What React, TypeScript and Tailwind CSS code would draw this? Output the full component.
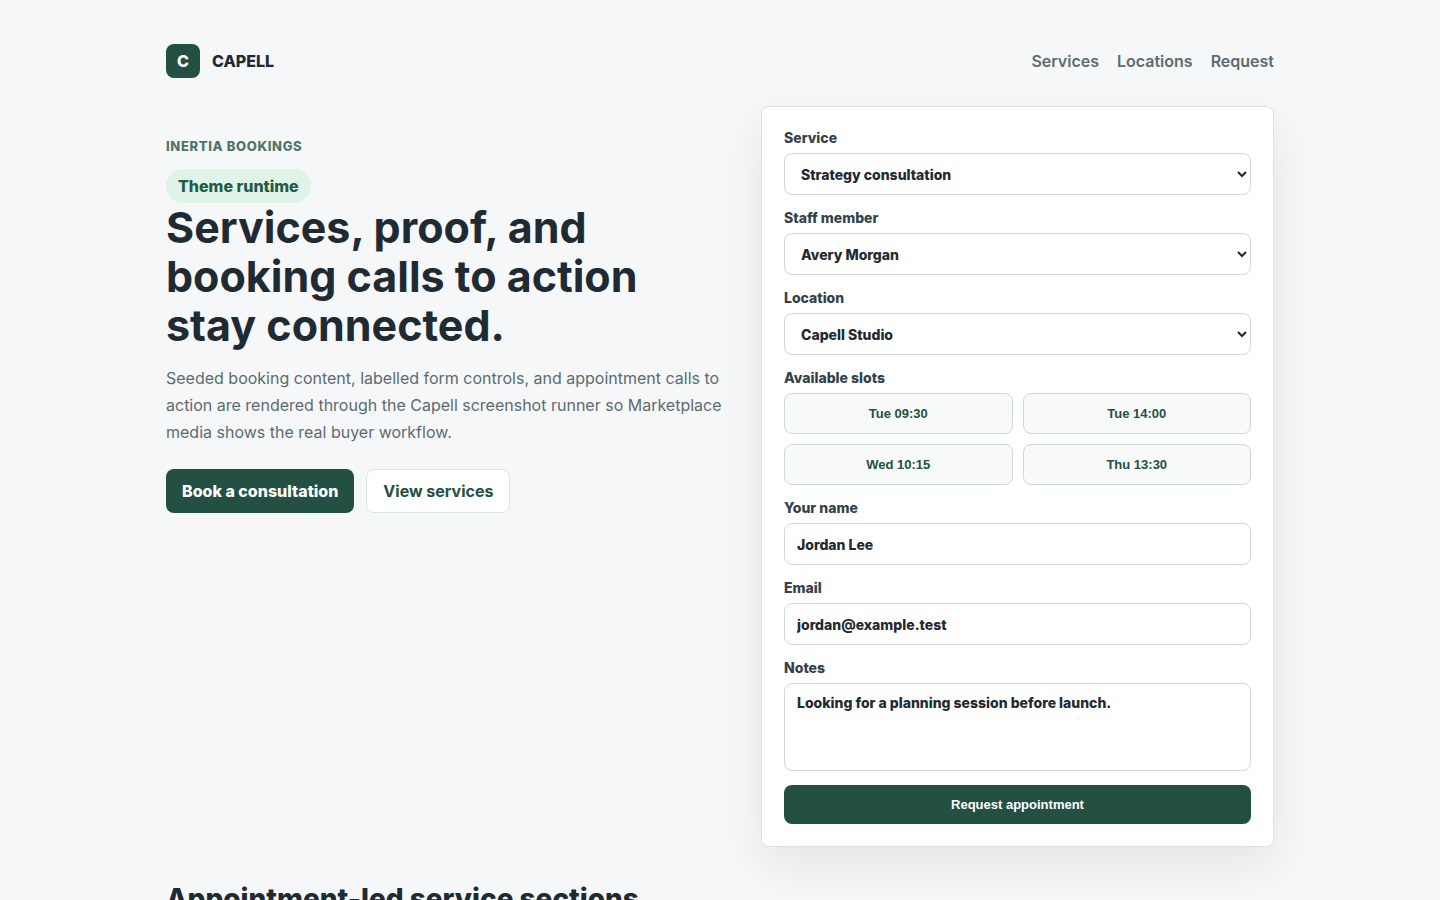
import type { ReactNode } from "react";

const labelClass = "text-[14px] leading-[17px] font-extrabold text-[#33424a]";

const controlClass =
  "w-full rounded-lg border border-[#cbdad6] bg-white px-3 text-[14px] leading-5 font-extrabold text-[#1f2a33]";

function Field({ id, label, children }: { id: string; label: string; children: ReactNode }) {
  return (
    <div className="grid gap-[7px]">
      <label htmlFor={id} className={labelClass}>
        {label}
      </label>
      {children}
    </div>
  );
}

function SelectField({ id, label, options }: { id: string; label: string; options: string[] }) {
  return (
    <Field id={id} label={label}>
      <select id={id} className={`${controlClass} h-[42px]`}>
        {options.map((option) => (
          <option key={option}>{option}</option>
        ))}
      </select>
    </Field>
  );
}

const slots = ["Tue 09:30", "Tue 14:00", "Wed 10:15", "Thu 13:30"];

function BookingForm() {
  return (
    <form
      id="request"
      onSubmit={(event) => event.preventDefault()}
      className="grid content-start gap-3.5 rounded-lg border border-[#dbe5e1] bg-white p-[22px] shadow-[0_18px_45px_rgba(20,24,22,0.08)]"
    >
      <SelectField id="service" label="Service" options={["Strategy consultation"]} />
      <SelectField id="staff" label="Staff member" options={["Avery Morgan"]} />
      <SelectField id="location" label="Location" options={["Capell Studio"]} />
      <div role="group" aria-labelledby="slots-label" className="grid gap-[7px]">
        <span id="slots-label" className={labelClass}>
          Available slots
        </span>
        <div className="grid grid-cols-2 gap-2.5">
          {slots.map((slot) => (
            <button
              key={slot}
              type="button"
              className="h-[41px] rounded-lg border border-[#cbdad6] bg-[#f8faf9] font-['Liberation_Sans',Arial,sans-serif] text-[13px] font-bold text-[#245044]"
            >
              {slot}
            </button>
          ))}
        </div>
      </div>
      <Field id="name" label="Your name">
        <input id="name" type="text" defaultValue="Jordan Lee" className={`${controlClass} h-[42px]`} />
      </Field>
      <Field id="email" label="Email">
        <input id="email" type="email" defaultValue="jordan@example.test" className={`${controlClass} h-[42px]`} />
      </Field>
      <Field id="notes" label="Notes">
        <textarea
          id="notes"
          defaultValue="Looking for a planning session before launch."
          className={`${controlClass} h-[88px] resize-none py-[9px]`}
        />
      </Field>
      <button
        type="submit"
        className="h-[39px] rounded-lg bg-[#245044] font-['Liberation_Sans',Arial,sans-serif] text-[13px] font-bold text-white"
      >
        Request appointment
      </button>
    </form>
  );
}

export default function App() {
  return (
    <div className="min-h-screen bg-[#f6f7f9] font-['Inter',sans-serif] text-[#1f2a33]">
      <div className="mx-auto max-w-[1180px] px-9 pt-11">
        <header className="mb-7 flex items-center justify-between">
          <a href="#" className="flex items-center gap-3 font-extrabold">
            <span className="grid size-[34px] place-items-center rounded-lg bg-[#245044] text-white">
              C
            </span>
            CAPELL
          </a>
          <nav className="flex gap-[18px] font-semibold text-[#5c6b71]">
            <a href="#services">Services</a>
            <a href="#locations">Locations</a>
            <a href="#request">Request</a>
          </nav>
        </header>
        <main>
          <section className="grid grid-cols-[1.05fr_0.95fr] gap-7">
            <div className="pt-8">
              <p className="text-[13px] leading-4 font-extrabold tracking-wider text-[#4f7568] uppercase">
                Inertia bookings
              </p>
              <span className="mt-[15px] inline-flex h-[34px] items-center rounded-full bg-[#dff3e8] px-3 align-top font-extrabold text-[#245b47]">
                Theme runtime
              </span>
              <h1 className="text-[43px] leading-[49px] font-bold">
                Services, proof, and booking calls to action stay connected.
              </h1>
              <p className="mt-[15px] text-[16px] leading-[27px] text-[#5c6b71]">
                Seeded booking content, labelled form controls, and appointment calls to action are rendered through
                the Capell screenshot runner so Marketplace media shows the real buyer workflow.
              </p>
              <div className="mt-[23px] flex gap-3">
                <a href="#request" className="flex h-11 items-center rounded-lg bg-[#245044] px-4 font-extrabold text-white">
                  Book a consultation
                </a>
                <a
                  href="#services"
                  className="flex h-11 items-center rounded-lg border border-[#dbe5e1] bg-white px-4 font-bold text-[#245044]"
                >
                  View services
                </a>
              </div>
            </div>
            <BookingForm />
          </section>
          <section id="services" className="mt-[34px]">
            <h2 className="text-[28px] leading-9 font-extrabold">Appointment-led service sections</h2>
          </section>
        </main>
      </div>
    </div>
  );
}
